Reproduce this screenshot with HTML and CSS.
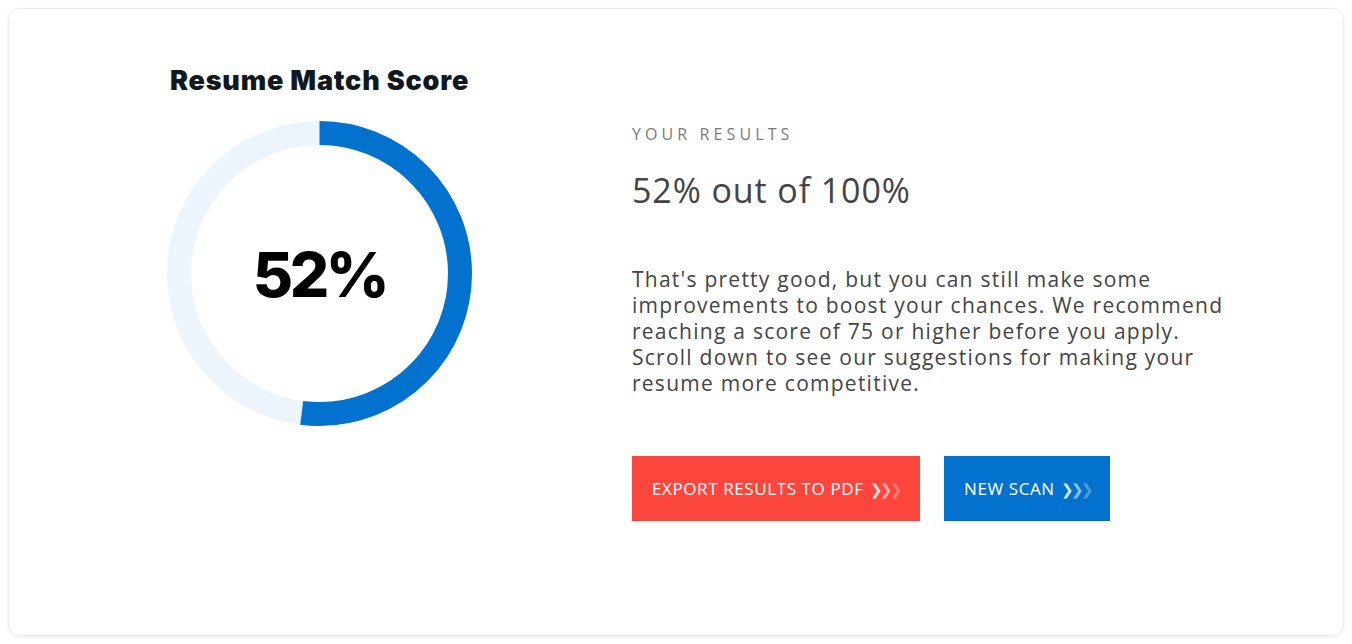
FILE: index.html
```html
<!DOCTYPE html>
<html>
<head>
<meta charset="utf-8">
<link rel="stylesheet" href="styles.css">
</head>
<body>
<div class="card">
  <div class="score-col">
    <h2 class="score-title">Resume Match Score</h2>
    <div class="ring">
      <svg width="305" height="305" viewBox="0 0 305 305">
        <circle cx="152.5" cy="152.5" r="140.5" fill="none" stroke="#ecf5fb" stroke-width="24"/>
        <circle cx="152.5" cy="152.5" r="140.5" fill="none" stroke="#0272ce" stroke-width="24"
          stroke-dasharray="459.1 882.8" transform="rotate(-90 152.5 152.5)"/>
      </svg>
      <div class="ring-value">52%</div>
    </div>
  </div>
  <div class="results-col">
    <div class="eyebrow">YOUR RESULTS</div>
    <div class="headline">52% out of 100%</div>
    <p class="summary">That's pretty good, but you can still make some<br>improvements to boost your chances. We recommend<br>reaching a score of 75 or higher before you apply.<br>Scroll down to see our suggestions for making your<br>resume more competitive.</p>
    <div class="actions">
      <a class="btn btn-red">EXPORT RESULTS TO PDF <span class="chev"><span class="c1">❯</span><span class="c2">❯</span><span class="c3">❯</span></span></a>
      <a class="btn btn-blue">NEW SCAN <span class="chev"><span class="c1">❯</span><span class="c2">❯</span><span class="c3">❯</span></span></a>
    </div>
  </div>
</div>
</body>
</html>
```
FILE: styles.css
```css
html, body {
  margin: 0;
  padding: 0;
  background: #ffffff;
}
body {
  padding: 8px;
  font-family: "Open Sans", "Liberation Sans", sans-serif;
  box-sizing: border-box;
  height: 644px;
}
.card {
  box-sizing: border-box;
  width: 1336px;
  height: 628px;
  border-radius: 12px;
  border: 1px solid #ececec;
  box-shadow: 0 1px 4px rgba(0,0,0,0.08);
  display: flex;
  padding: 0 0 0 158px;
  gap: 160px;
}
.score-col {
  width: 305px;
  display: flex;
  flex-direction: column;
  align-items: center;
}
.score-title {
  margin: 56px 0 0 0;
  font-family: Inter, Lato, "Liberation Sans", sans-serif;
  font-weight: 900;
  font-size: 27px;
  line-height: 32px;
  color: #111820;
  letter-spacing: 0.8px;
  white-space: nowrap;
}
.ring {
  margin-top: 24px;
  position: relative;
  width: 305px;
  height: 305px;
}
.ring svg { display: block; }
.ring-value {
  position: absolute;
  inset: 0;
  display: flex;
  align-items: center;
  justify-content: center;
  font-family: Inter, Lato, "Liberation Sans", sans-serif;
  font-weight: 800;
  font-size: 62px;
  letter-spacing: -3.5px;
  color: #000;
  padding-top: 2px;
}
.results-col {
  padding-top: 115px;
  width: 640px;
}
.eyebrow {
  font-size: 16px;
  letter-spacing: 4.1px;
  color: #7a7a7a;
  line-height: 20px;
  font-weight: 500;
}
.headline {
  margin-top: 26px;
  font-size: 34px;
  line-height: 40px;
  color: #444;
  font-weight: 500;
  letter-spacing: 0.9px;
}
.summary {
  margin: 56px 0 0 0;
  font-size: 21px;
  line-height: 26px;
  color: #444;
  font-weight: 500;
  letter-spacing: 1.25px;
  white-space: nowrap;
}
.actions {
  margin-top: 60px;
  display: flex;
  gap: 24px;
}
.btn {
  display: flex;
  align-items: center;
  height: 65px;
  padding: 0 20px;
  color: #fff;
  font-size: 17px;
  letter-spacing: 0.6px;
  text-decoration: none;
  box-sizing: border-box;
  white-space: nowrap;
}
.btn-red { background: #fc453d; width: 288px; }
.btn-blue { background: #0272ce; width: 166px; }
.chev {
  margin-left: 6px;
  font-size: 15px;
  letter-spacing: -3px;
}
.c1 { opacity: 0.85; }
.c2 { opacity: 0.55; }
.c3 { opacity: 0.3; }
```
